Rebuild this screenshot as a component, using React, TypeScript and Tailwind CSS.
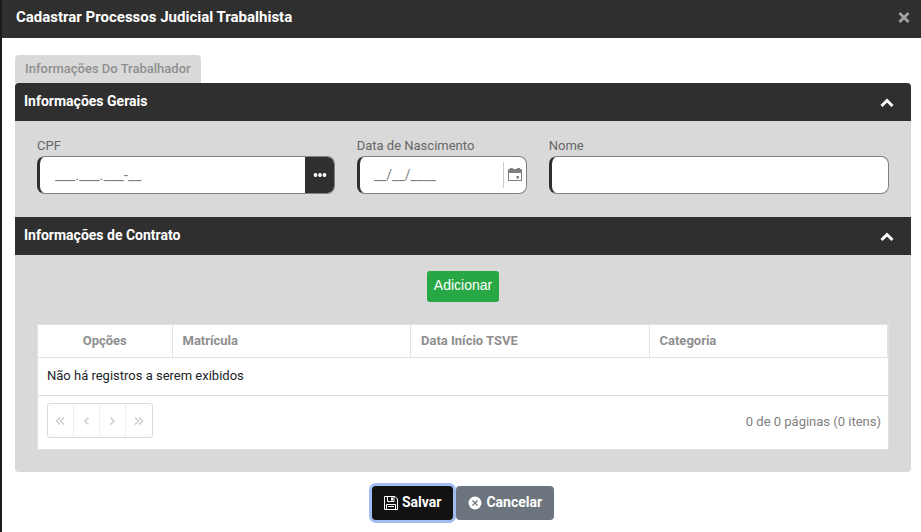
import { useState } from "react";
import type { ReactNode } from "react";

function Section({ title, children }: { title: string; children: ReactNode }) {
  const [open, setOpen] = useState(true);

  return (
    <section>
      <h2 className="bg-[#2f2f2f] text-white">
        <button
          type="button"
          aria-expanded={open}
          onClick={() => setOpen(!open)}
          className="flex h-[38px] w-full items-center justify-between pl-[9px] pr-4 text-sm font-bold"
        >
          <span className="pb-0.5">{title}</span>
          <svg
            viewBox="0 0 16 22"
            className={open ? "h-[22px] w-4" : "h-[22px] w-4 rotate-180"}
            fill="none"
            stroke="currentColor"
            strokeWidth="3"
          >
            <path d="M2.5 15 8 9.5 13.5 15" />
          </svg>
        </button>
      </h2>
      {open && children}
    </section>
  );
}

function CalendarIcon() {
  return (
    <svg viewBox="0 0 14 14" className="h-3.5 w-3.5" fill="currentColor">
      <path
        d="M1 1h1V0h3v1h4V0h3v1h1a1 1 0 0 1 1 1v11H0V2a1 1 0 0 1 1-1zM1 5v7h12V5z"
        fillRule="evenodd"
      />
      <path d="M8.500 8h2.500v2.500H8.500z" />
    </svg>
  );
}

function SaveIcon() {
  return (
    <svg viewBox="0 0 14 14" className="h-3.5 w-3.5" fill="none" stroke="currentColor">
      <path d="M.5.5h10.500l2.500 2.500v10.500H.5z" />
      <path d="M3.500.5v5h6.500v-5M2.500 13.500V8.500h9v5M4 10.500h6" />
      <path d="M7 1.500h2v3H7z" fill="currentColor" stroke="none" />
    </svg>
  );
}

function CancelIcon() {
  return (
    <svg viewBox="0 0 14 14" className="h-3.5 w-3.5">
      <circle cx="7" cy="7" r="6.500" fill="currentColor" />
      <path d="m4.500 4.500 5 5m0-5-5 5" stroke="#6c757d" strokeWidth="1.200" />
    </svg>
  );
}

const pagerButtons = [
  { label: "Primeira página", path: "M6 3.500 2.500 7 6 10.500M10 3.500 6.500 7 10 10.500" },
  { label: "Página anterior", path: "M8.500 3.500 5 7 8.500 10.500" },
  { label: "Próxima página", path: "M4.500 3.500 8 7 4.500 10.500" },
  { label: "Última página", path: "M2 3.500 5.500 7 2 10.500M6 3.500 9.500 7 6 10.500" },
];

const fieldClass =
  "h-[38px] rounded-lg border border-l-3 border-[#808080] border-l-[#2f2f2f] bg-white text-[#666] focus-within:border-[#2f2f2f]";

export default function App() {
  return (
    <div className="min-h-screen border-l-2 border-[#1b1b1b] bg-white font-[Roboto,sans-serif] text-[13px] text-[#666]">
      {/* Title bar */}
      <header className="flex h-[38px] items-center justify-between bg-[#2f2f2f] pb-1 pl-3.5 pr-[11px]">
        <h1 className="text-[15px] font-bold text-white">
          Cadastrar Processos Judicial Trabalhista
        </h1>
        <button type="button" aria-label="Fechar" className="text-[#a3a3a3]">
          <svg viewBox="0 0 12 12" className="h-3 w-3" stroke="currentColor" strokeWidth="2.800">
            <path d="m1.500 2 9 9m0-9-9 9" />
          </svg>
        </button>
      </header>

      <main className="pl-[13px] pr-2.5 pt-[17px]">
        <button
          type="button"
          className="block h-7 rounded-t-sm bg-[#d9d9d9] px-2.5 font-medium text-[#8f8f8f]"
        >
          Informações Do Trabalhador
        </button>

        <div className="overflow-hidden rounded bg-[#d9d9d9]">
          <Section title="Informações Gerais">
            <div className="grid grid-cols-[7fr_4fr_8fr] gap-[22px] px-[22px] pb-[23px] pt-[15px]">
              <div className="min-w-0">
                <label htmlFor="cpf" className="block pb-px leading-[19px]">
                  CPF
                </label>
                <div className={`${fieldClass} flex overflow-hidden`}>
                  <input
                    id="cpf"
                    placeholder="___.___.___-__"
                    className="min-w-0 flex-1 px-[15px] text-[15px] outline-none placeholder:text-[#808080]"
                  />
                  <button
                    type="button"
                    aria-label="Buscar CPF"
                    className="-my-px -mr-px flex w-[30px] items-center justify-center bg-[#2f2f2f] text-white"
                  >
                    <svg viewBox="0 0 14 4" className="h-1 w-3.5" fill="currentColor">
                      <circle cx="2.500" cy="2" r="1.900" />
                      <circle cx="7" cy="2" r="1.900" />
                      <circle cx="11.500" cy="2" r="1.900" />
                    </svg>
                  </button>
                </div>
              </div>
              <div className="min-w-0">
                <label htmlFor="nascimento" className="block pb-px leading-[19px]">
                  Data de Nascimento
                </label>
                <div className={`${fieldClass} flex items-center`}>
                  <input
                    id="nascimento"
                    placeholder="__/__/____"
                    className="min-w-0 flex-1 px-3.5 text-sm outline-none placeholder:text-[#808080]"
                  />
                  <button
                    type="button"
                    aria-label="Abrir calendário"
                    className="flex h-[26px] items-center border-l border-[#ccc] px-1 text-[#808080]"
                  >
                    <CalendarIcon />
                  </button>
                </div>
              </div>
              <div className="min-w-0">
                <label htmlFor="nome" className="block pb-px leading-[19px]">
                  Nome
                </label>
                <input id="nome" className={`${fieldClass} block w-full px-3.5 outline-none`} />
              </div>
            </div>
          </Section>

          <Section title="Informações de Contrato">
            <div className="px-[22px] pb-[22px] pt-4">
              <button
                type="button"
                className="mx-auto block h-[31px] rounded-[3px] bg-[#28a745] px-[7px] pb-[3px] font-['Liberation_Sans',sans-serif] text-sm text-white"
              >
                Adicionar
              </button>

              <div className="mt-[22px] border border-[#dee2e6] bg-white">
                <table className="w-full table-fixed">
                  <thead>
                    <tr className="h-8 border-b border-[#dee2e6] text-left text-[#8f8f8f]">
                      <th className="w-[134px] border-r border-[#dee2e6] text-center font-bold">
                        Opções
                      </th>
                      <th className="border-r border-[#dee2e6] px-2.5 font-bold">Matrícula</th>
                      <th className="border-r border-[#dee2e6] px-2.5 font-bold">
                        Data Início TSVE
                      </th>
                      <th className="border-r border-[#dee2e6] px-2.5 font-bold">Categoria</th>
                    </tr>
                  </thead>
                  <tbody>
                    <tr className="h-[38px] border-b border-[#dadce0] text-[#212529]">
                      <td colSpan={4} className="px-[9px]">
                        Não há registros a serem exibidos
                      </td>
                    </tr>
                  </tbody>
                </table>

                {/* Pager */}
                <div className="flex items-center justify-between pb-[11px] pl-[9px] pr-[7px] pt-[7px] text-[#808080]">
                  <div className="flex divide-x divide-[#eee] rounded-[3px] border border-[#dadada]">
                    {pagerButtons.map((button) => (
                      <button
                        key={button.label}
                        type="button"
                        disabled
                        aria-label={button.label}
                        className="flex h-[33px] w-[26px] items-center justify-center text-[#ccc]"
                      >
                        <svg
                          viewBox="0 0 13 13"
                          className="h-[13px] w-[13px]"
                          fill="none"
                          stroke="currentColor"
                          strokeWidth="1.500"
                        >
                          <path d={button.path} />
                        </svg>
                      </button>
                    ))}
                  </div>
                  <span className="pt-1">0 de 0 páginas (0 itens)</span>
                </div>
              </div>
            </div>
          </Section>
        </div>

        <footer className="flex justify-center gap-[3px] py-3.5 text-sm font-bold text-white">
          <button
            type="button"
            className="flex h-[34px] items-center gap-1 rounded bg-[#121212] px-3 ring-3 ring-[#a0bcf0]"
          >
            <SaveIcon />
            <span className="pb-0.5">Salvar</span>
          </button>
          <button
            type="button"
            className="flex h-[34px] items-center gap-1 rounded bg-[#6c757d] px-3"
          >
            <CancelIcon />
            <span className="pb-0.5">Cancelar</span>
          </button>
        </footer>
      </main>
    </div>
  );
}
